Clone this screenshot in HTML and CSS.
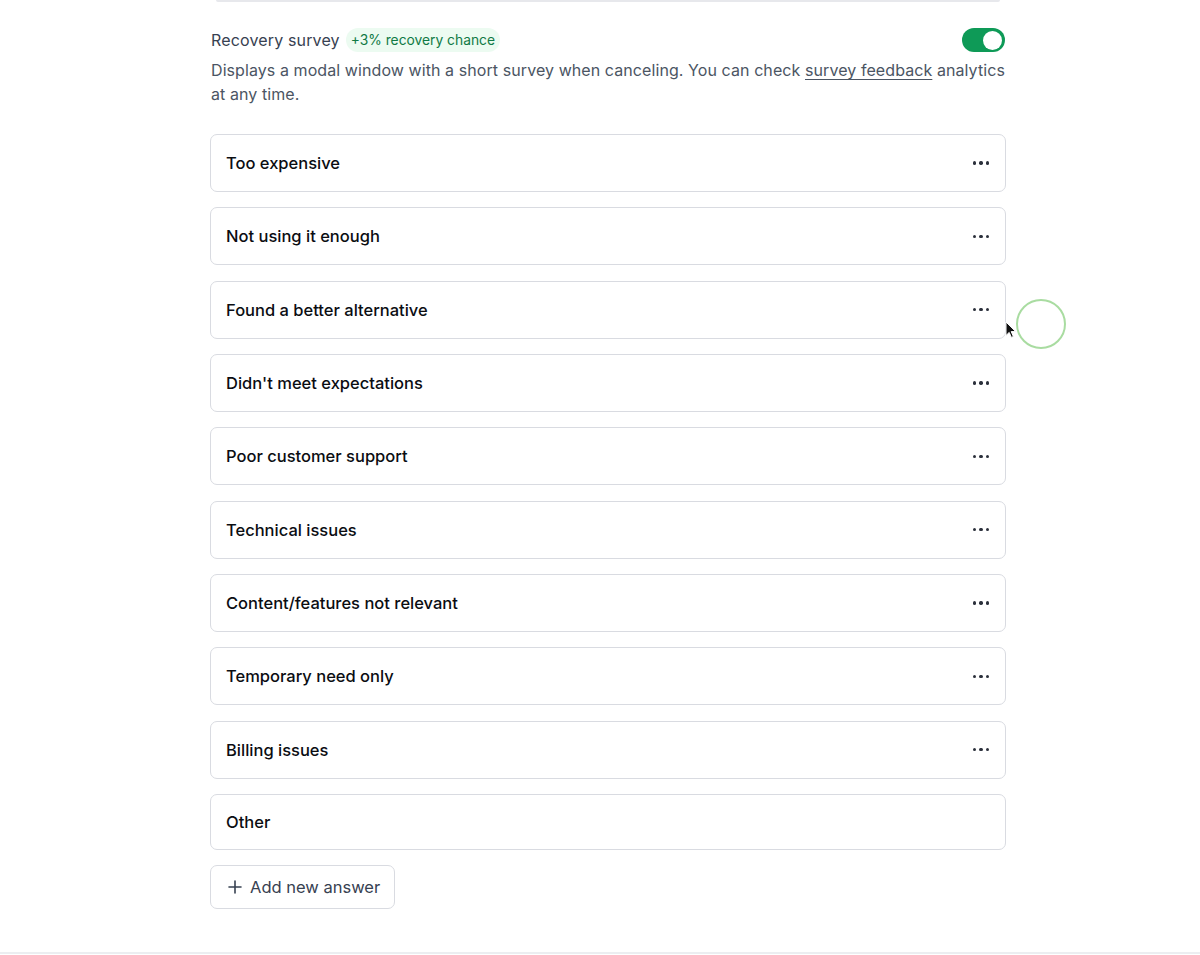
FILE: index.html
```html
<!DOCTYPE html>
<html lang="en">
<head>
<meta charset="utf-8">
<title>Recovery survey</title>
<link rel="stylesheet" href="styles.css">
</head>
<body>
<div class="page">
  <div class="section">
    <div class="prev-edge"></div>
    <div class="header">
      <div class="title-group">
        <span class="title">Recovery survey</span>
        <span class="badge">+3% recovery chance</span>
      </div>
      <span class="toggle" role="switch" aria-checked="true"><span class="knob"></span></span>
    </div>
    <p class="desc">Displays a modal window with a short survey when canceling. You can check <a href="#" class="link">survey feedback</a> analytics at any time.</p>

    <ul class="answers">
      <li class="answer"><span class="label">Too expensive</span><button class="more" aria-label="More"><i></i><i></i><i></i></button></li>
      <li class="answer"><span class="label">Not using it enough</span><button class="more" aria-label="More"><i></i><i></i><i></i></button></li>
      <li class="answer"><span class="label">Found a better alternative</span><button class="more" aria-label="More"><i></i><i></i><i></i></button></li>
      <li class="answer"><span class="label">Didn't meet expectations</span><button class="more" aria-label="More"><i></i><i></i><i></i></button></li>
      <li class="answer"><span class="label">Poor customer support</span><button class="more" aria-label="More"><i></i><i></i><i></i></button></li>
      <li class="answer"><span class="label">Technical issues</span><button class="more" aria-label="More"><i></i><i></i><i></i></button></li>
      <li class="answer"><span class="label">Content/features not relevant</span><button class="more" aria-label="More"><i></i><i></i><i></i></button></li>
      <li class="answer"><span class="label">Temporary need only</span><button class="more" aria-label="More"><i></i><i></i><i></i></button></li>
      <li class="answer"><span class="label">Billing issues</span><button class="more" aria-label="More"><i></i><i></i><i></i></button></li>
      <li class="answer"><span class="label">Other</span></li>
    </ul>

    <button class="add-btn">
      <svg class="plus" width="14" height="14" viewBox="0 0 14 14" aria-hidden="true"><path d="M7 1v12M1 7h12" stroke="currentColor" stroke-width="1.6" stroke-linecap="round"/></svg>
      <span>Add new answer</span>
    </button>

    <div class="click-ring"></div>
    <svg class="cursor" width="12" height="18" viewBox="0 0 12 18" aria-hidden="true"><path d="M1 1v13.5l3.2-3.1 2.2 5 2-.9-2.2-4.9h4.5z" fill="#111" stroke="#fff" stroke-width="1"/></svg>
  </div>
  <div class="divider"></div>
</div>
</body>
</html>
```

FILE: styles.css
```css
* { box-sizing: border-box; }

html, body {
  margin: 0;
  padding: 0;
  background: #ffffff;
}

body {
  font-family: Inter, "Noto Sans", "Liberation Sans", sans-serif;
  color: #111827;
  -webkit-font-smoothing: antialiased;
}

.page {
  width: 1200px;
}

.section {
  position: relative;
  width: 796px;
  margin-left: 210px;
  padding-bottom: 43px;
}

.prev-edge {
  height: 2px;
  margin: 0 6px;
  background: #e7e8ec;
  border-radius: 0 0 6px 6px;
}

.header {
  display: flex;
  align-items: center;
  justify-content: space-between;
  margin-top: 26px;
  height: 24px;
}

.title-group {
  display: flex;
  align-items: center;
  gap: 6px;
}

.title {
  font-size: 16px;
  letter-spacing: 0.15px;
  color: #374151;
  line-height: 24px;
  padding-left: 1px;
}

.badge {
  display: inline-flex;
  align-items: center;
  height: 24px;
  padding: 0 5px;
  border-radius: 12px;
  background: #ecfbf1;
  color: #107a45;
  font-size: 13.8px;
}

.toggle {
  position: relative;
  width: 43px;
  height: 24px;
  border-radius: 12px;
  background: #0e9a57;
  margin-right: 1px;
}

.knob {
  position: absolute;
  top: 2.5px;
  right: 3px;
  width: 19px;
  height: 19px;
  border-radius: 50%;
  background: #ffffff;
}

.desc {
  margin: 6px 0 0;
  padding-left: 1px;
  font-size: 16px;
  letter-spacing: 0.08px;
  line-height: 24px;
  color: #4b5563;
}

.link {
  color: #4b5563;
  text-decoration: underline;
  text-underline-offset: 3px;
  text-decoration-thickness: 1px;
}

.answers {
  list-style: none;
  margin: 28px 0 0;
  padding: 0;
  display: flex;
  flex-direction: column;
  gap: 15.33px;
}

.answer {
  display: flex;
  align-items: center;
  justify-content: space-between;
  padding: 15px 11px 15px 15px;
  border: 1px solid #d9dbe1;
  border-radius: 7px;
  background: #ffffff;
}

.label {
  font-size: 16.5px;
  font-weight: 450;
  line-height: 24px;
  color: #0b0d12;
}

.more {
  display: flex;
  align-items: center;
  justify-content: center;
  gap: 3px;
  width: 26px;
  height: 26px;
  padding: 0;
  border: 0;
  background: transparent;
  cursor: pointer;
}

.more i {
  display: block;
  width: 3.4px;
  height: 3.4px;
  border-radius: 50%;
  background: #2b303b;
}

.add-btn {
  display: inline-flex;
  align-items: center;
  gap: 8px;
  margin-top: 15px;
  height: 44px;
  padding: 0 14px 0 17px;
  border: 1px solid #d9dbe1;
  border-radius: 7px;
  background: #ffffff;
  font-family: inherit;
  font-size: 16.5px;
  color: #374151;
  cursor: pointer;
}

.plus {
  color: #374151;
}

.divider {
  height: 2px;
  background: #eceef1;
}

.click-ring {
  position: absolute;
  left: 806px;
  top: 299px;
  width: 50px;
  height: 50px;
  border-radius: 50%;
  border: 2px solid #a9dca1;
}

.cursor {
  position: absolute;
  left: 795px;
  top: 321px;
}
```
